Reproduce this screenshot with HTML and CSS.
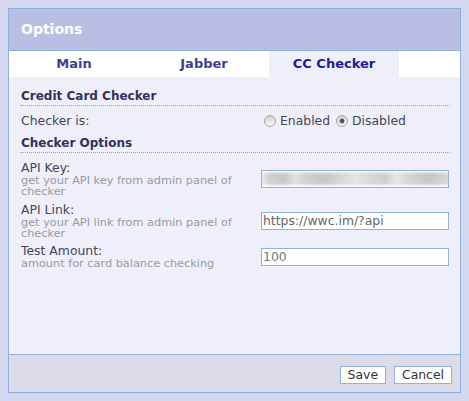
FILE: index.html
```html
<!DOCTYPE html>
<html>
<head>
<meta charset="utf-8">
<title>Options</title>
<link rel="stylesheet" href="styles.css">
</head>
<body>
<div class="dialog">
  <div class="header">Options</div>
  <div class="tabs">
    <div class="tab">Main</div>
    <div class="tab">Jabber</div>
    <div class="tab active">CC Checker</div>
  </div>
  <div class="content">
    <div class="section-title">Credit Card Checker</div>
    <div class="row row-radio">
      <div class="label">Checker is:</div>
      <div class="radios">
        <span class="radio"></span><span class="rlabel">Enabled</span>
        <span class="radio checked"></span><span class="rlabel">Disabled</span>
      </div>
    </div>
    <div class="section-title">Checker Options</div>
    <div class="fields">
      <div class="row">
        <div>
          <div class="label">API Key:</div>
          <div class="hint">get your API key from admin panel of checker</div>
        </div>
        <div class="input blurred"></div>
      </div>
      <div class="row">
        <div>
          <div class="label">API Link:</div>
          <div class="hint">get your API link from admin panel of checker</div>
        </div>
        <input class="input" type="text" value="https://wwc.im/?api">
      </div>
      <div class="row">
        <div>
          <div class="label">Test Amount:</div>
          <div class="hint">amount for card balance checking</div>
        </div>
        <input class="input light" type="text" value="100">
      </div>
    </div>
  </div>
  <div class="footer">
    <button class="btn">Save</button>
    <button class="btn">Cancel</button>
  </div>
</div>
</body>
</html>
```

FILE: styles.css
```css
body {
  margin: 8px;
  background: #d4d7f0;
  font-family: "DejaVu Sans", Verdana, sans-serif;
}

.dialog {
  box-sizing: border-box;
  height: 385px;
  border: 1px solid #8dafe0;
  display: flex;
  flex-direction: column;
  background: #eeeff8;
}

.header {
  height: 41px;
  border-bottom: 1px solid #8dafe0;
  background: #b8bfe3;
  color: #fff;
  font-weight: bold;
  font-size: 14px;
  line-height: 41px;
  padding-left: 12px;
}

.tabs {
  display: flex;
  height: 26px;
  background: #fff;
}

.tab {
  width: 130px;
  text-align: center;
  font-weight: bold;
  font-size: 13px;
  line-height: 26px;
  color: #3f3f8c;
}

.tab.active {
  background: #eeeff8;
  color: #1c1ca0;
}

.content {
  flex: 1;
  padding: 11px 10px 0 11px;
}

.section-title {
  font-weight: bold;
  font-size: 12px;
  line-height: 17px;
  color: #32325e;
  padding-left: 1px;
  border-bottom: 1px dotted #7fa6d6;
}

.row {
  display: grid;
  grid-template-columns: 1fr 188px;
  column-gap: 10px;
  align-items: center;
  padding: 0 1px;
}

.row-radio {
  height: 29px;
}

.label {
  font-size: 12.4px;
  line-height: 14px;
  color: #45455a;
}

.hint {
  font-size: 11.3px;
  line-height: 11.3px;
  color: #9a9aa3;
}

.fields {
  display: flex;
  flex-direction: column;
  gap: 5px;
  padding-top: 8px;
}

.input {
  box-sizing: border-box;
  width: 188px;
  height: 18px;
  margin: 0;
  padding: 0 1px;
  border: 1px solid #8fb2de;
  border-radius: 0;
  background: #fff;
  font-family: "DejaVu Sans", Verdana, sans-serif;
  font-size: 12.4px;
  color: #666;
  outline: none;
}

.input.light {
  color: #777;
}

.blurred {
  background:
    linear-gradient(to bottom, #fff 0, rgba(255,255,255,0) 3px, rgba(255,255,255,0) 12px, #fff 16px),
    linear-gradient(90deg, #e9e9e9 0, #d0d0d0 4%, #c9c9c9 12%, #e2e2e2 18%, #d0d0d0 24%, #c8c8c8 34%, #d6d6d6 42%, #e4e4e4 50%, #d9d9d9 58%, #cfcfcf 66%, #e6e6e6 72%, #d4d4d4 80%, #c6c6c6 90%, #d8d8d8 100%);
}

.radios {
  display: flex;
  align-items: center;
  padding-left: 3px;
}

.radio {
  box-sizing: border-box;
  width: 12px;
  height: 12px;
  border-radius: 50%;
  border: 1px solid #a8a8a8;
  background: linear-gradient(#d4d4d4, #f6f6f6);
}

.radio.checked {
  background:
    radial-gradient(circle, #555 0, #555 2px, rgba(85,85,85,0) 2.8px),
    linear-gradient(#d4d4d4, #f6f6f6);
}

.rlabel {
  margin-left: 4px;
  margin-right: 6px;
  font-size: 12.4px;
  line-height: 14px;
  color: #45455a;
}

.footer {
  height: 37px;
  border-top: 1px solid #8dafe0;
  background: #dcdce8;
  display: flex;
  justify-content: flex-end;
  align-items: flex-start;
  gap: 8px;
  padding: 11px 8px 0 0;
  box-sizing: border-box;
  height: 38px;
}

.btn {
  box-sizing: border-box;
  height: 18px;
  margin: 0;
  padding: 0 7px;
  border: 1px solid #8fb2de;
  border-radius: 0;
  background: #fff;
  font-family: "DejaVu Sans", Verdana, sans-serif;
  font-size: 12.4px;
  line-height: 16px;
  color: #333;
}
```
